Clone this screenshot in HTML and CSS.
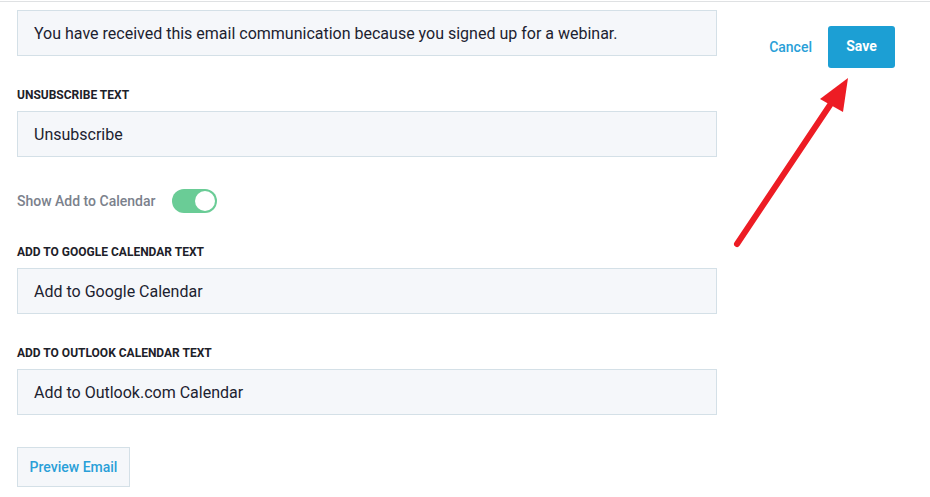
FILE: index.html
```html
<!DOCTYPE html>
<html>
<head>
<meta charset="utf-8">
<link rel="stylesheet" href="styles.css">
</head>
<body>
<div class="page">
  <div class="content">
    <form class="form">
      <div class="field first">
        <div class="input">You have received this email communication because you signed up for a webinar.</div>
      </div>
      <div class="field">
        <label class="label">UNSUBSCRIBE TEXT</label>
        <div class="input">Unsubscribe</div>
      </div>
      <div class="toggle-row">
        <span class="toggle-label">Show Add to Calendar</span>
        <span class="toggle"><span class="knob"></span></span>
      </div>
      <div class="field">
        <label class="label">ADD TO GOOGLE CALENDAR TEXT</label>
        <div class="input">Add to Google Calendar</div>
      </div>
      <div class="field">
        <label class="label">ADD TO OUTLOOK CALENDAR TEXT</label>
        <div class="input">Add to Outlook.com Calendar</div>
      </div>
      <div class="preview-wrap">
        <button type="button" class="preview">Preview Email</button>
      </div>
    </form>
    <div class="actions">
      <button type="button" class="cancel">Cancel</button>
      <button type="button" class="save">Save</button>
    </div>
  </div>
  <svg class="arrow" width="930" height="497" viewBox="0 0 930 497">
    <line x1="737" y1="244" x2="830" y2="105" stroke="#ed1c24" stroke-width="6" stroke-linecap="round"/>
    <polygon points="848,78 820,99 843,112" fill="#ed1c24"/>
  </svg>
</div>
</body>
</html>
```
FILE: styles.css
```css
html, body {
  margin: 0;
  padding: 0;
  background: #ffffff;
}
body {
  font-family: Roboto, "Liberation Sans", Arial, sans-serif;
  width: 930px;
  height: 497px;
  overflow: hidden;
}
.page {
  position: relative;
  width: 930px;
  height: 497px;
  padding-top: 1px;
  box-sizing: border-box;
}
.content {
  border-top: 1px solid #dfe1e3;
  display: flex;
  justify-content: space-between;
  padding: 0 35px 0 17px;
}
.form {
  width: 700px;
  display: flex;
  flex-direction: column;
  margin: 0;
}
.field {
  margin-top: 32px;
  display: flex;
  flex-direction: column;
}
.field.first {
  margin-top: 8px;
}
.label {
  font-size: 12px;
  line-height: 15px;
  font-weight: 700;
  color: #1d2129;
  margin-bottom: 8px;
  letter-spacing: 0;
}
.input {
  height: 46px;
  box-sizing: border-box;
  border: 1px solid #d4e0e7;
  background: #f5f7fa;
  padding: 0 16px;
  display: flex;
  align-items: center;
  font-size: 16px;
  color: #1c2230;
  white-space: nowrap;
}
.toggle-row {
  margin-top: 32px;
  display: flex;
  align-items: center;
  height: 24px;
}
.toggle-label {
  font-size: 14px;
  font-weight: 500;
  color: #7b818c;
  margin-right: 17px;
}
.toggle {
  width: 45px;
  height: 24px;
  border-radius: 12px;
  background: #6acc96;
  display: flex;
  align-items: center;
  justify-content: flex-end;
  padding: 0 2px;
  box-sizing: border-box;
}
.knob {
  width: 20px;
  height: 20px;
  border-radius: 50%;
  background: #ffffff;
}
.preview-wrap {
  margin-top: 32px;
  display: flex;
}
.preview {
  height: 40px;
  width: 113px;
  box-sizing: border-box;
  border: 1px solid #d4e0e7;
  background: #f5f7fa;
  color: #2a9fd8;
  font-family: inherit;
  font-size: 14px;
  font-weight: 500;
  padding: 0;
  cursor: pointer;
}
.actions {
  display: flex;
  align-items: center;
  margin-top: 24px;
  align-self: flex-start;
}
.cancel {
  border: none;
  background: transparent;
  color: #2a9fd8;
  font-family: inherit;
  font-size: 14px;
  font-weight: 500;
  padding: 0 0 1px 0;
  margin-right: 16px;
}
.save {
  width: 67px;
  height: 42px;
  border: none;
  border-radius: 3px;
  background: #1c9fd4;
  color: #ffffff;
  font-family: inherit;
  font-size: 14px;
  font-weight: 700;
  padding: 0 0 2px 0;
}
.arrow {
  position: absolute;
  left: 0;
  top: 0;
  pointer-events: none;
}
```
